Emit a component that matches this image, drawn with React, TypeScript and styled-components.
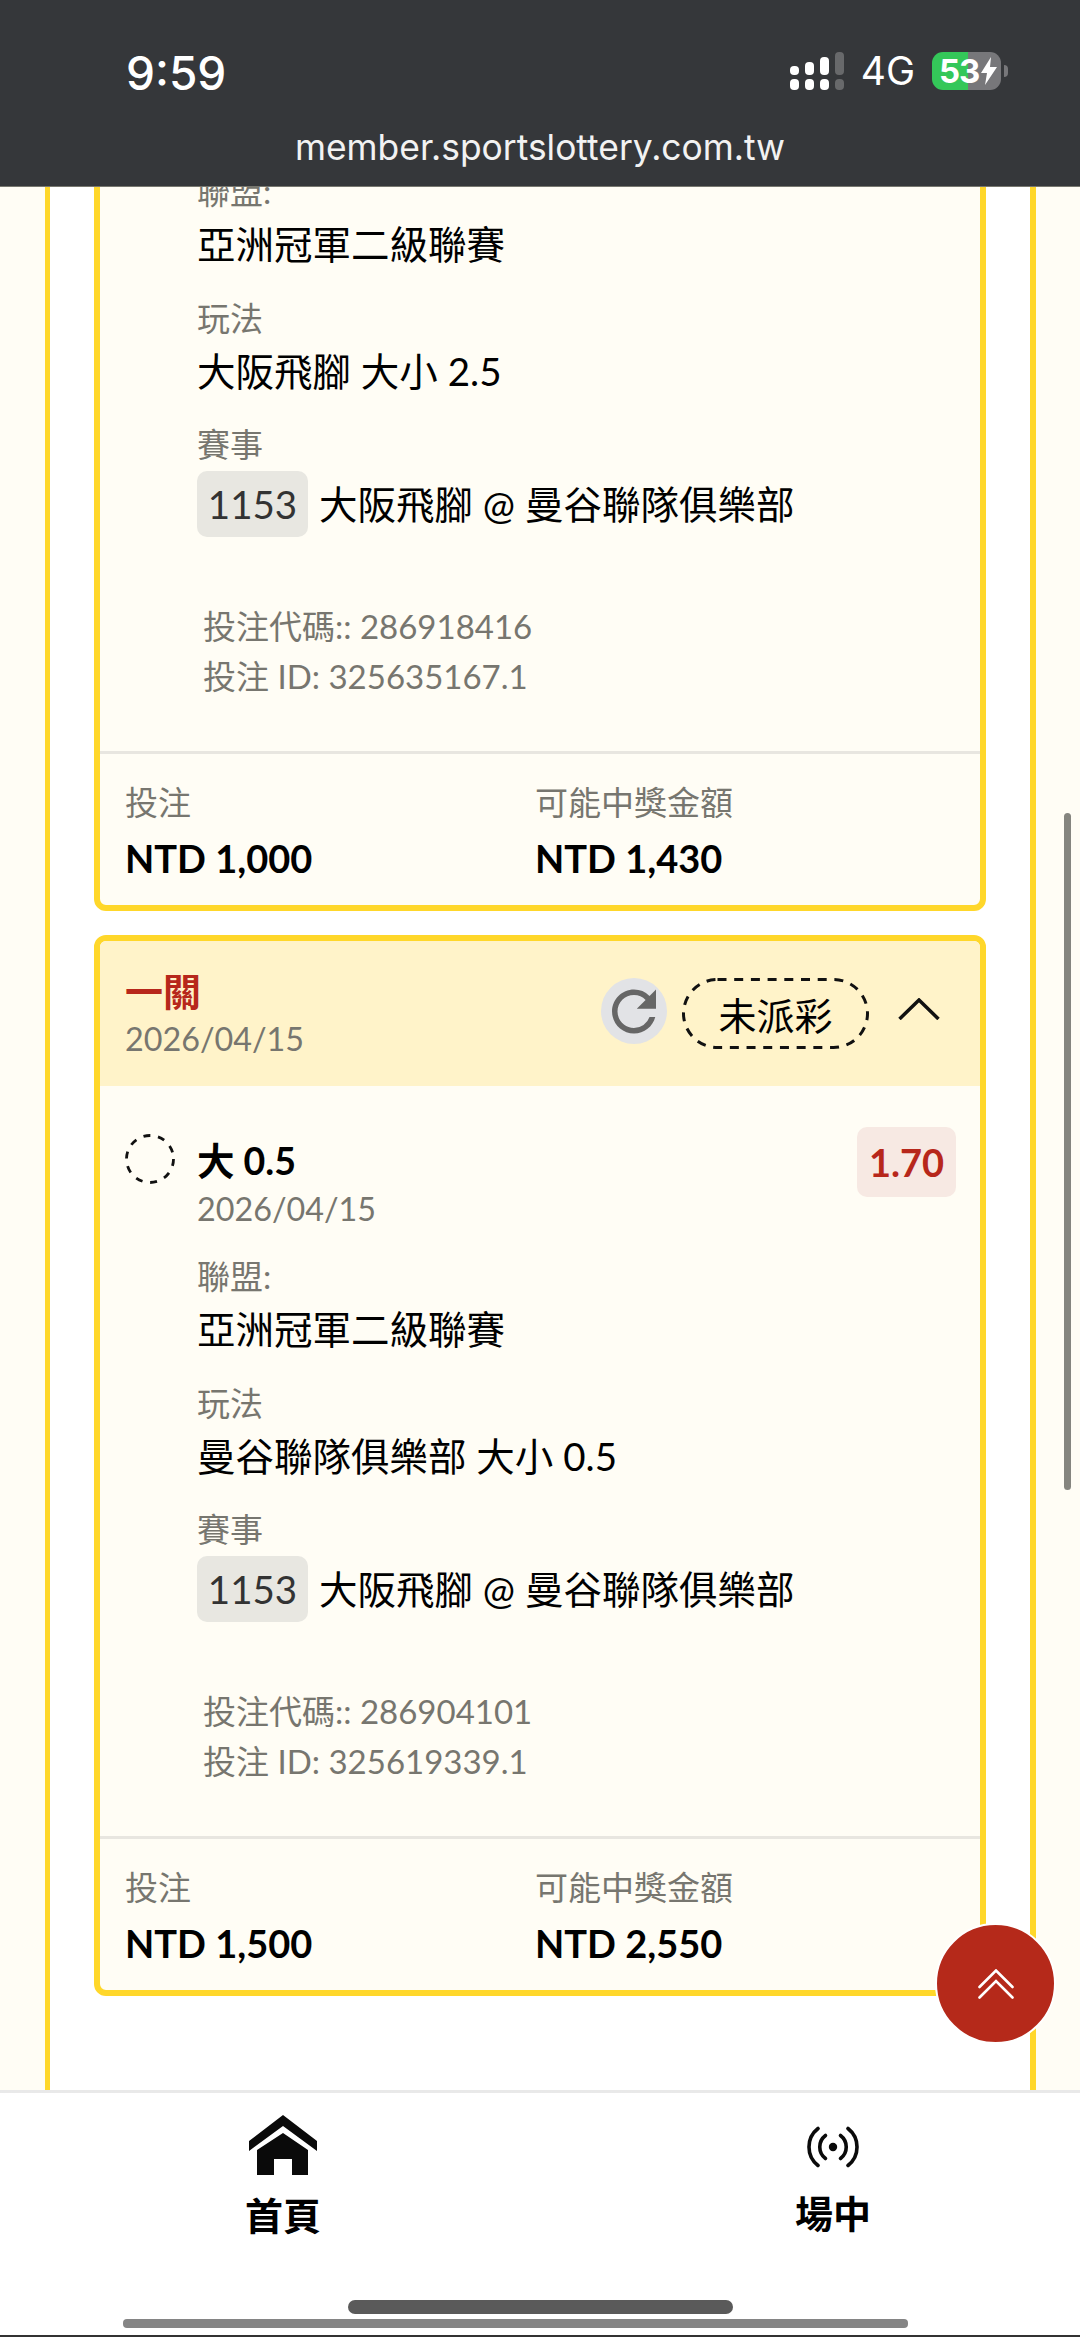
import React from 'react';
import styled, { createGlobalStyle } from 'styled-components';
import { MdRefresh } from 'react-icons/md';

const GlobalStyle = createGlobalStyle`
  html, body {
    margin: 0;
    padding: 0;
    background: #fffdf5;
  }
  * {
    box-sizing: border-box;
  }
`;

const Page = styled.div`
  width: 1080px;
  height: 2337px;
  display: flex;
  flex-direction: column;
  overflow: hidden;
  position: relative;
  font-family: 'Lato', 'Noto Sans CJK TC', sans-serif;
  color: #000;
`;

/* iOS status + address bar */
const TopBar = styled.header`
  flex: 0 0 187px;
  background: #35373a;
  border-bottom: 1px solid #77776f;
  color: #fff;
  font-family: 'Inter', 'Liberation Sans', sans-serif;
  display: flex;
  flex-direction: column;
  position: relative;
  z-index: 2;
`;

const StatusRow = styled.div`
  height: 112px;
  padding: 40px 79px 0 126px;
  display: flex;
  align-items: flex-start;
  justify-content: space-between;
`;

const Clock = styled.div`
  font-size: 46px;
  line-height: 52px;
  font-weight: 500;
  margin-top: 7px;
`;

const StatusIcons = styled.div`
  display: flex;
  align-items: center;
  height: 60px;
  margin-top: 1px;
`;

const Network = styled.div`
  font-size: 39px;
  line-height: 44px;
  font-weight: 400;
  margin: 0 17px 0 17px;
`;

const Battery = styled.div`
  width: 69px;
  height: 38px;
  border-radius: 11px;
  background: linear-gradient(90deg, #34c759 0 36px, #77777a 36px 100%);
  display: flex;
  align-items: center;
  padding-left: 7px;
  gap: 2px;
  font-size: 33px;
  font-weight: 700;
  letter-spacing: -1px;
  position: relative;
`;

const BatteryNub = styled.span`
  position: absolute;
  right: -7px;
  top: 13px;
  width: 4px;
  height: 12px;
  border-radius: 0 4px 4px 0;
  background: #77777a;
`;

const Url = styled.div`
  text-align: center;
  font-size: 35.4px;
  line-height: 44px;
  font-weight: 400;
  color: #f2f2f2;
  margin-top: 14px;
`;

const Main = styled.main`
  flex: 1;
  min-height: 0;
  overflow: hidden;
  background: #fffdf5;
  display: flex;
  flex-direction: column;
  justify-content: flex-end;
`;

const Panel = styled.section`
  flex-shrink: 0;
  width: 991px;
  margin-left: 45px;
  padding: 0 44px 94px;
  background: #fff;
  border-left: 5px solid #ffd72a;
  border-right: 6px solid #ffd72a;
  display: flex;
  flex-direction: column;
  gap: 24px;
`;

const Card = styled.article`
  border: 6px solid #ffd72a;
  border-radius: 12px;
  background: #fffdf5;
  overflow: hidden;
`;

const CardHeader = styled.div`
  height: 145px;
  background: #fff3c9;
  padding: 26px 25px 0;
  display: flex;
  justify-content: space-between;
`;

const ParlayName = styled.div`
  font-size: 38px;
  line-height: 48px;
  font-weight: 700;
  color: #b7271b;
`;

const DateText = styled.div`
  font-size: 32.3px;
  line-height: 44px;
  color: #77766f;
`;

const HeaderDate = styled(DateText)`
  margin-top: 2px;
`;

const HeaderActions = styled.div`
  display: flex;
  align-items: flex-start;
  margin-top: 11px;
  margin-right: 15px;
`;

const RefreshButton = styled.button`
  width: 66px;
  height: 66px;
  padding: 0;
  border: 0;
  border-radius: 50%;
  background: #e2e3e6;
  color: #666;
  display: flex;
  align-items: center;
  justify-content: center;
`;

const StatusPill = styled.div`
  width: 187px;
  height: 71px;
  margin-left: 15px;
  position: relative;
  display: flex;
  align-items: center;
  justify-content: center;
  font-size: 38px;
`;

const PillOutline = styled.svg`
  position: absolute;
  inset: 0;
`;

const Chevron = styled.svg`
  width: 42px;
  height: 22px;
  margin: 20px 0 0 29px;
`;

const Leg = styled.div`
  padding: 41px 24px 50px 25px;
`;

const LegHead = styled.div`
  display: flex;
  align-items: flex-start;
`;

const PendingMark = styled.svg`
  flex: 0 0 50px;
  height: 50px;
  margin-top: 7px;
`;

const LegTitles = styled.div`
  flex: 1;
  padding: 11px 0 0 22px;
`;

const LegTitle = styled.div`
  font-size: 37.5px;
  line-height: 46px;
  font-weight: 700;
`;

const LegDate = styled(DateText)`
  margin-top: 3px;
`;

const Odds = styled.div`
  width: 99px;
  height: 70px;
  border-radius: 10px;
  background: #f7e9e3;
  color: #b7271b;
  font-size: 38px;
  font-weight: 700;
  display: flex;
  align-items: center;
  justify-content: center;
`;

const Fields = styled.dl`
  margin: 23px 0 0 72px;
`;

const FieldLabel = styled.dt`
  font-size: 33px;
  line-height: 44px;
  color: #77766f;
`;

const FieldValue = styled.dd`
  margin: 5px 0 25.5px;
  font-size: 38.5px;
  line-height: 52px;
  display: flex;
  align-items: center;

  &:last-child {
    margin-bottom: 0;
  }
`;

const MatchNo = styled.span`
  width: 111px;
  height: 66px;
  margin-right: 11px;
  border-radius: 10px;
  background: #e8e7e1;
  color: #333;
  display: flex;
  align-items: center;
  justify-content: center;
`;

const BetMeta = styled.div`
  margin: 64px 0 0 78px;
  font-size: 33px;
  line-height: 50px;
  color: #77766f;
`;

const Totals = styled.div`
  border-top: 3px solid #e8e6e0;
  padding: 26px 25px 22px;
  display: grid;
  grid-template-columns: 410px 1fr;
`;

const TotalLabel = styled.div`
  font-size: 33px;
  line-height: 44px;
  color: #77766f;
`;

const TotalValue = styled.div`
  margin-top: 9px;
  font-size: 38px;
  line-height: 50px;
  font-weight: 700;
`;

const ScrollThumb = styled.div`
  position: absolute;
  left: 1064px;
  top: 813px;
  width: 7px;
  height: 677px;
  border-radius: 4px;
  background: #85857f;
`;

const BackToTop = styled.button`
  position: absolute;
  left: 935px;
  top: 1923px;
  width: 121px;
  height: 121px;
  padding: 0;
  border: 2px solid #fff;
  border-radius: 50%;
  background: #b5291a;
  display: flex;
  align-items: center;
  justify-content: center;
`;

const BottomNav = styled.nav`
  flex: 0 0 247px;
  background: #fff;
  border-top: 3px solid #e9e9e9;
  border-bottom: 2px solid #333;
  display: flex;
  flex-direction: column;
  position: relative;
  z-index: 1;
`;

const NavItems = styled.div`
  height: 142px;
  padding: 22px 0 0 233px;
  display: flex;
  gap: 450px;
`;

const NavItem = styled.div`
  width: 100px;
  display: flex;
  flex-direction: column;
  align-items: center;
`;

const NavIcon = styled.div<{ $drop?: number }>`
  height: 62px;
  padding-top: ${props => props.$drop || 0}px;
  display: flex;
  align-items: center;
  justify-content: center;
`;

const NavLabel = styled.div`
  margin-top: 17px;
  font-size: 38px;
  line-height: 44px;
  font-weight: 700;
`;

const HomeIndicator = styled.div`
  width: 385px;
  height: 14px;
  margin: 65px 0 0 348px;
  border-radius: 7px;
  background: #5a5a5a;
`;

const PageScrollbar = styled.div`
  width: 785px;
  height: 9px;
  margin: 5px 0 0 123px;
  border-radius: 4px;
  background: #858585;
`;

const SignalIcon = () => (
  <svg width="54" height="38" viewBox="0 0 54 38">
    <rect x="0" y="14" width="9" height="9" rx="4" fill="#fff" />
    <rect x="15" y="10" width="9" height="13" rx="4" fill="#fff" />
    <rect x="30" y="5" width="9" height="18" rx="4" fill="#fff" />
    <rect x="45" y="0" width="9" height="23" rx="4" fill="#68696b" />
    <rect x="0" y="27" width="9" height="11" rx="4" fill="#fff" />
    <rect x="15" y="27" width="9" height="11" rx="4" fill="#fff" />
    <rect x="30" y="27" width="9" height="11" rx="4" fill="#fff" />
    <rect x="45" y="27" width="9" height="11" rx="4" fill="#68696b" />
  </svg>
);

const BoltIcon = () => (
  <svg width="16" height="28" viewBox="0 0 16 28">
    <path d="M10 0 L0 16 H6 L4 28 L16 10 H9 Z" fill="#fff" />
  </svg>
);

const HomeIcon = () => (
  <svg width="68" height="61" viewBox="0 0 68 61">
    <path d="M34 0 L68 26 V36 L34 11 L0 36 V26 Z" fill="#0a0a0a" />
    <path d="M34 18 L59 35 V60 H43 V44 H25 V60 H8 V35 Z" fill="#0a0a0a" />
  </svg>
);

const LiveIcon = () => (
  <svg width="52" height="42" viewBox="0 0 52 42" fill="none" stroke="#0a0a0a" strokeWidth="3.6" strokeLinecap="round">
    <circle cx="26" cy="21" r="4.2" fill="#0a0a0a" stroke="none" />
    <path d="M33.5 9.5 a14.4 14.4 0 0 1 0 23" />
    <path d="M18.5 9.5 a14.4 14.4 0 0 0 0 23" />
    <path d="M41 2.5 a23.5 23.5 0 0 1 0 37" />
    <path d="M11 2.5 a23.5 23.5 0 0 0 0 37" />
  </svg>
);

const DoubleUp = () => (
  <svg width="36" height="30" viewBox="0 0 36 30" fill="none" stroke="#fff" strokeWidth="2.6" strokeLinecap="round">
    <path d="M1.5 18 L18 1.5 L34.5 18" />
    <path d="M1.5 28.5 L18 12 L34.5 28.5" />
  </svg>
);

type LegInfo = {
  league: string;
  market: string;
  matchNo: string;
  match: string;
  betCode: string;
  betId: string;
};

const Fieldset: React.FC<{ leg: LegInfo }> = ({ leg }) => (
  <>
    <Fields>
      <FieldLabel>聯盟:</FieldLabel>
      <FieldValue>{leg.league}</FieldValue>
      <FieldLabel>玩法</FieldLabel>
      <FieldValue>{leg.market}</FieldValue>
      <FieldLabel>賽事</FieldLabel>
      <FieldValue>
        <MatchNo>{leg.matchNo}</MatchNo>
        {leg.match}
      </FieldValue>
    </Fields>
    <BetMeta>
      <div>投注代碼:: {leg.betCode}</div>
      <div>投注 ID: {leg.betId}</div>
    </BetMeta>
  </>
);

const TotalsRow: React.FC<{ stake: string; payout: string }> = ({ stake, payout }) => (
  <Totals>
    <div>
      <TotalLabel>投注</TotalLabel>
      <TotalValue>{stake}</TotalValue>
    </div>
    <div>
      <TotalLabel>可能中獎金額</TotalLabel>
      <TotalValue>{payout}</TotalValue>
    </div>
  </Totals>
);

const firstLeg: LegInfo = {
  league: '亞洲冠軍二級聯賽',
  market: '大阪飛腳 大小 2.5',
  matchNo: '1153',
  match: '大阪飛腳 @ 曼谷聯隊俱樂部',
  betCode: '286918416',
  betId: '325635167.1',
};

const secondLeg: LegInfo = {
  league: '亞洲冠軍二級聯賽',
  market: '曼谷聯隊俱樂部 大小 0.5',
  matchNo: '1153',
  match: '大阪飛腳 @ 曼谷聯隊俱樂部',
  betCode: '286904101',
  betId: '325619339.1',
};

const App: React.FC = () => {
  return (
    <Page>
      <GlobalStyle />
      <TopBar>
        <StatusRow>
          <Clock>9:59</Clock>
          <StatusIcons>
            <SignalIcon />
            <Network>4G</Network>
            <Battery>
              53
              <BoltIcon />
              <BatteryNub />
            </Battery>
          </StatusIcons>
        </StatusRow>
        <Url>member.sportslottery.com.tw</Url>
      </TopBar>

      <Main>
        <Panel>
          <Card>
            <Leg>
              <Fieldset leg={firstLeg} />
            </Leg>
            <TotalsRow stake="NTD 1,000" payout="NTD 1,430" />
          </Card>

          <Card>
            <CardHeader>
              <div>
                <ParlayName>一關</ParlayName>
                <HeaderDate>2026/04/15</HeaderDate>
              </div>
              <HeaderActions>
                <RefreshButton>
                  <MdRefresh size={67} />
                </RefreshButton>
                <StatusPill>
                  <PillOutline width="187" height="71" viewBox="0 0 187 71" fill="none">
                    <rect x="1.5" y="1.5" width="184" height="68" rx="34" stroke="#111" strokeWidth="3" strokeDasharray="9 7.7" />
                  </PillOutline>
                  未派彩
                </StatusPill>
                <Chevron viewBox="0 0 42 22" fill="none" stroke="#111" strokeWidth="3.5">
                  <path d="M1.5 21 L21 2 L40.5 21" />
                </Chevron>
              </HeaderActions>
            </CardHeader>
            <Leg>
              <LegHead>
                <PendingMark viewBox="0 0 50 50" fill="none">
                  <circle cx="25" cy="25" r="23.5" stroke="#111" strokeWidth="2.8" strokeDasharray="7 7.77" />
                </PendingMark>
                <LegTitles>
                  <LegTitle>大 0.5</LegTitle>
                  <LegDate>2026/04/15</LegDate>
                </LegTitles>
                <Odds>1.70</Odds>
              </LegHead>
              <Fieldset leg={secondLeg} />
            </Leg>
            <TotalsRow stake="NTD 1,500" payout="NTD 2,550" />
          </Card>
        </Panel>
      </Main>

      <BottomNav>
        <NavItems>
          <NavItem>
            <NavIcon>
              <HomeIcon />
            </NavIcon>
            <NavLabel>首頁</NavLabel>
          </NavItem>
          <NavItem>
            <NavIcon $drop={4}>
              <LiveIcon />
            </NavIcon>
            <NavLabel>場中</NavLabel>
          </NavItem>
        </NavItems>
        <HomeIndicator />
        <PageScrollbar />
      </BottomNav>

      <ScrollThumb />
      <BackToTop>
        <DoubleUp />
      </BackToTop>
    </Page>
  );
};

export default App;
